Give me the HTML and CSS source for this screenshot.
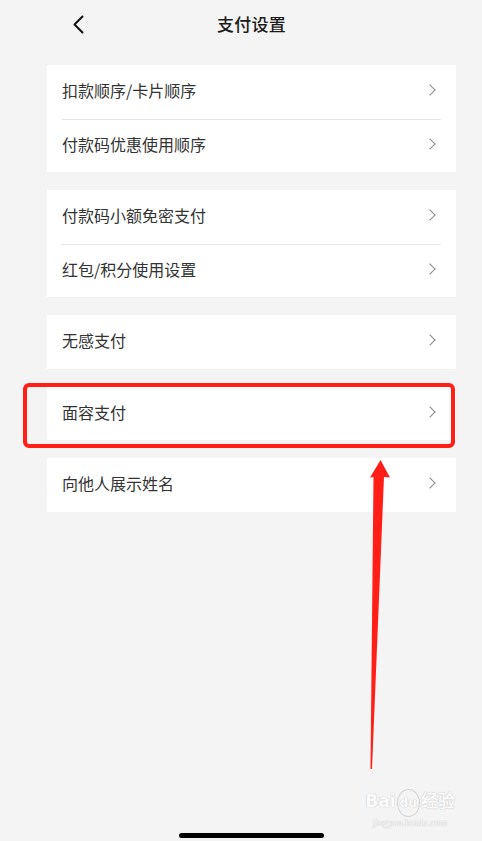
FILE: index.html
```html
<!doctype html>
<html lang="zh-CN">
  <head>
    <meta charset="UTF-8" />
    <meta name="viewport" content="width=device-width, initial-scale=1.0" />
    <title>支付设置</title>
    <link rel="stylesheet" href="styles.css">
  </head>
  <body>
    <div class="page">
      <div class="nav">
        <svg class="back" width="12" height="19" viewBox="0 0 12 19">
          <path d="M10.5 1.5 L2.5 9.5 L10.5 17.5" fill="none" stroke="#111" stroke-width="2" stroke-linecap="round" stroke-linejoin="round" />
        </svg>
        <h1>支付设置</h1>
      </div>

      <div class="card">
        <div class="row"><span>扣款顺序/卡片顺序</span><i class="arrow"></i></div>
        <div class="row"><span>付款码优惠使用顺序</span><i class="arrow"></i></div>
      </div>

      <div class="card">
        <div class="row"><span>付款码小额免密支付</span><i class="arrow"></i></div>
        <div class="row"><span>红包/积分使用设置</span><i class="arrow"></i></div>
      </div>

      <div class="card">
        <div class="row"><span>无感支付</span><i class="arrow"></i></div>
      </div>

      <div class="card">
        <div class="row"><span>面容支付</span><i class="arrow"></i></div>
      </div>

      <div class="card">
        <div class="row"><span>向他人展示姓名</span><i class="arrow"></i></div>
      </div>
    </div>

    <!-- annotation drawn on top of the screenshot -->
    <svg class="markup" width="482" height="841" viewBox="0 0 482 841">
      <rect x="25" y="385" width="428" height="61" rx="4" fill="none" stroke="#ff1f17" stroke-width="4" />
      <polygon points="380.5,460 390,477.5 384,477 372,769 370.5,769 373.5,477 370,477.5" fill="#ff1f17" />
    </svg>

    <div class="watermark">
      <div class="wm-logo">Bai<span class="paw">du</span>经验</div>
      <div class="wm-url">jingyan.baidu.com</div>
    </div>

    <div class="home-bar"></div>
  </body>
</html>
```

FILE: styles.css
```css
* {
  margin: 0;
  padding: 0;
  box-sizing: border-box;
}

body {
  font-family: "Noto Sans CJK SC", "Noto Sans", sans-serif;
  background: #f4f4f4;
  color: #333;
  width: 482px;
  height: 841px;
  position: relative;
  overflow: hidden;
}

.page {
  padding: 0 26px 0 47px;
}

.nav {
  height: 50px;
  padding-bottom: 4px;
  display: flex;
  align-items: center;
  justify-content: center;
  position: relative;
  margin-bottom: 15px;
}

.back {
  position: absolute;
  left: 25px;
  top: 15px;
}

.nav h1 {
  font-size: 17px;
  line-height: 17px;
  font-weight: 500;
  color: #1a1a1a;
  letter-spacing: 0.3px;
}

.card {
  background: #fff;
  margin-bottom: 18px;
}

.row {
  height: 53.5px;
  margin: 0 15px;
  padding-right: 5px;
  padding-bottom: 3px;
  display: flex;
  align-items: center;
  justify-content: space-between;
  font-size: 16px;
  color: #333;
}

.row span {
  line-height: 16px;
}

.row + .row {
  border-top: 1px solid #e6e6e6;
}

.arrow {
  width: 8px;
  height: 8px;
  border-top: 1.4px solid #8a8a8a;
  border-right: 1.4px solid #8a8a8a;
  transform: rotate(45deg);
  margin-right: 2px;
}

.markup {
  position: absolute;
  left: 0;
  top: 0;
  pointer-events: none;
}

.watermark {
  position: absolute;
  left: 364px;
  top: 788px;
  width: 92px;
  color: #fbfbfb;
  text-shadow: 0 0 1px #c8c8c8, 0 0 1px #c8c8c8;
  text-align: center;
}

.wm-logo {
  font-family: "DejaVu Sans", sans-serif;
  font-size: 17px;
  font-weight: bold;
  line-height: 26px;
  white-space: nowrap;
}

.wm-logo .paw {
  font-size: 12px;
  display: inline-block;
  border-radius: 50%;
  padding: 0 2px;
  margin: 0 2px;
  box-shadow: 0 0 0 1px #d4d4d4;
}

.wm-url {
  font-family: "Liberation Serif", serif;
  font-size: 10px;
  line-height: 14px;
}

.home-bar {
  position: absolute;
  left: 179px;
  top: 833px;
  width: 145px;
  height: 5px;
  border-radius: 3px;
  background: #000;
}
```
